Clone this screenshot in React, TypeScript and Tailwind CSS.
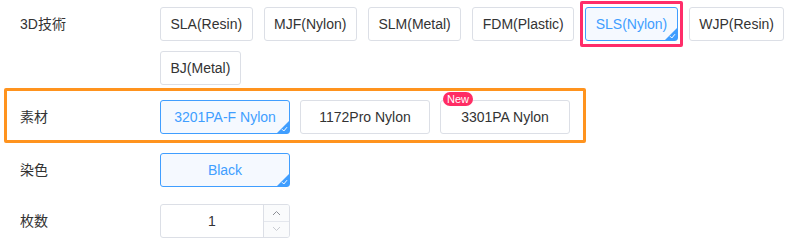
import type { ReactNode } from 'react';

const font = { fontFamily: '"Liberation Sans", Arial, "Noto Sans CJK JP", sans-serif' };

const techs = ['SLA(Resin)', 'MJF(Nylon)', 'SLM(Metal)', 'FDM(Plastic)', 'SLS(Nylon)', 'WJP(Resin)', 'BJ(Metal)'];

function Corner() {
  return (
    <span className="absolute right-0 bottom-0 h-[12px] w-[12px] overflow-hidden">
      <span className="absolute right-0 bottom-0 h-0 w-0 border-l-[12px] border-b-[12px] border-l-transparent border-b-[#409eff]" />
      <svg className="absolute right-[1px] bottom-[1px]" width="7" height="6" viewBox="0 0 7 6">
        <path d="M1 3.2 L2.8 5 L6 1.2" fill="none" stroke="#fff" strokeWidth="1" />
      </svg>
    </span>
  );
}

function Option({ label, selected, wide, badge }: { label: string; selected?: boolean; wide?: boolean; badge?: boolean }) {
  return (
    <div
      className={`relative flex h-[34px] items-center justify-center rounded-[3px] border px-[9.5px] text-[14px] ${
        wide ? 'w-[130px]' : ''
      } ${selected ? 'border-[#409eff] bg-[#f5f9ff] text-[#409eff]' : 'border-[#dcdfe6] bg-white text-[#333]'}`}
    >
      {label}
      {selected && <Corner />}
      {badge && (
        <span className="absolute left-[2px] -top-[9px] flex h-[14px] items-center rounded-[7px] bg-[#ff2d64] px-[4px] text-[11px] leading-none text-white">
          New
        </span>
      )}
    </div>
  );
}

function Row({ label, children, className = '' }: { label: string; children: ReactNode; className?: string }) {
  return (
    <div className={`relative flex items-start pl-5 ${className}`}>
      <div className="flex h-[34px] w-[140px] items-center text-[14px] text-[#333]">{label}</div>
      {children}
    </div>
  );
}

export default function App() {
  return (
    <div className="h-[247px] w-[794px] bg-white pt-[7px]" style={font}>
      <Row label="3D技術">
        <div className="flex w-[634px] flex-wrap gap-x-[11px] gap-y-[10px]">
          {techs.map((t) => (
            <div key={t} className="relative">
              <Option label={t} selected={t === 'SLS(Nylon)'} />
              {t === 'SLS(Nylon)' && (
                <span className="pointer-events-none absolute -top-[6px] -left-[5px] -right-[5px] -bottom-[6px] rounded-[2px] border-[3px] border-[#ff2d6a]" />
              )}
            </div>
          ))}
        </div>
      </Row>

      <Row label="素材" className="mt-[15px]">
        <span className="pointer-events-none absolute left-[4px] -top-[12px] h-[55px] w-[582px] rounded-[2px] border-[3px] border-[#ff931e]" />
        <div className="flex gap-x-[10px]">
          <Option label="3201PA-F Nylon" selected wide />
          <Option label="1172Pro Nylon" wide />
          <Option label="3301PA Nylon" wide badge />
        </div>
      </Row>

      <Row label="染色" className="mt-[19px]">
        <Option label="Black" selected wide />
      </Row>

      <Row label="枚数" className="mt-[17px]">
        <div className="flex h-[34px] w-[130px] overflow-hidden rounded-[3px] border border-[#dcdfe6] bg-white">
          <div className="flex flex-1 items-center justify-center text-[14px] text-[#333]">1</div>
          <div className="flex w-[26px] flex-col border-l border-[#dcdfe6] bg-[#fafbfc]">
            <div className="flex flex-1 items-center justify-center border-b border-[#e4e7ed]">
              <svg width="9" height="6" viewBox="0 0 9 6">
                <path d="M1 5 L4.5 1.5 L8 5" fill="none" stroke="#8c8f96" strokeWidth="1" />
              </svg>
            </div>
            <div className="flex flex-1 items-center justify-center">
              <svg width="9" height="6" viewBox="0 0 9 6">
                <path d="M1 1 L4.5 4.5 L8 1" fill="none" stroke="#c8cbd1" strokeWidth="1" />
              </svg>
            </div>
          </div>
        </div>
      </Row>
    </div>
  );
}
